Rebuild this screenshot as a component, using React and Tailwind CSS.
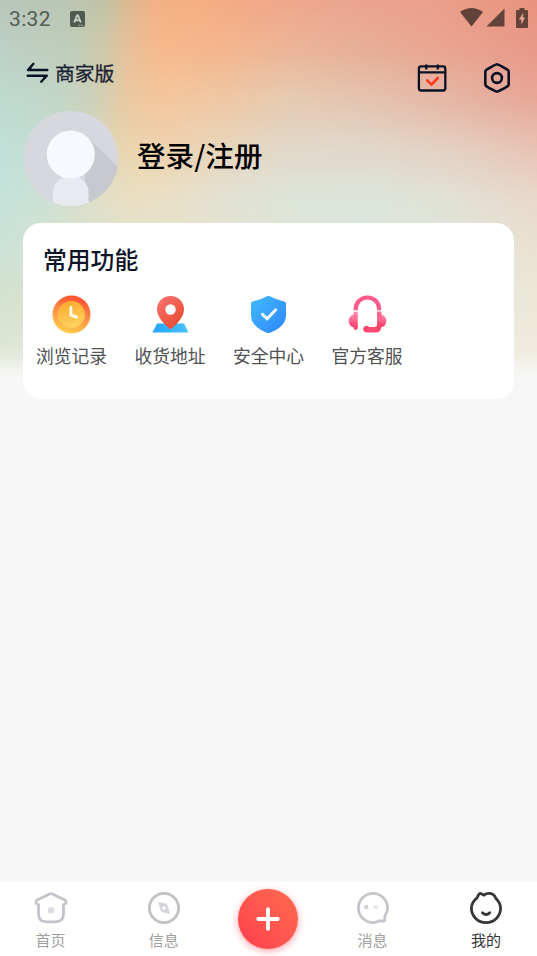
import React from "react";

// Colour mesh of the header artwork: one row of [x, colour] stops per height.
const mesh = [
  { y: 0, stops: [[0, "#b9c5ba"], [60, "#bac6b4"], [100, "#bfc4a8"], [125, "#d6bb94"], [150, "#f0b286"], [200, "#f6ae82"], [260, "#f1a888"], [330, "#eca68e"], [430, "#eba08b"], [537, "#e9927c"]] },
  { y: 50, stops: [[0, "#bcd1c6"], [70, "#c0cdbb"], [105, "#cfc9aa"], [130, "#e9c098"], [160, "#f7b98c"], [220, "#f4b68d"], [290, "#ecb598"], [360, "#e7af98"], [440, "#e9a591"], [537, "#e9998a"]] },
  { y: 100, stops: [[0, "#bedacf"], [60, "#c2d6c8"], [95, "#ced1b8"], [125, "#e8caa2"], [160, "#f4c69d"], [220, "#efc8a4"], [290, "#e5cbb3"], [370, "#e4c3b0"], [450, "#e5b6a5"], [537, "#e7a798"]] },
  { y: 150, stops: [[0, "#c0e0d8"], [60, "#c7dccf"], [95, "#d8d8be"], [130, "#ebd5ae"], [170, "#eed3b1"], [220, "#e8d6bd"], [290, "#e1d9ca"], [370, "#e1d8ca"], [450, "#e4d1c2"], [537, "#e7c3b5"]] },
  { y: 200, stops: [[0, "#c5e3db"], [50, "#cde1d4"], [90, "#dddfc9"], [130, "#eadfc3"], [170, "#e9e0c8"], [230, "#e1e2d3"], [300, "#dde5db"], [380, "#dde5dc"], [450, "#e1e2d6"], [537, "#e8d9ca"]] },
  { y: 250, stops: [[0, "#cbe2d6"], [90, "#dce3cf"], [200, "#e8e4cf"], [350, "#dde8dd"], [450, "#e2e6da"], [537, "#eae2d2"]] },
  { y: 300, stops: [[0, "#d4e2ce"], [100, "#e2e4cc"], [350, "#e3e8db"], [537, "#ebe8d8"]] },
  { y: 348, stops: [[0, "#dee6d5"], [200, "#e6e9db"], [537, "#efebdc"]] },
  { y: 376, stops: [[0, "#f7f7f7"], [537, "#f7f7f7"]] },
];

function MeshBackground() {
  return (
    <svg className="absolute inset-x-0 top-0" width="537" height="395" viewBox="0 0 537 395" aria-hidden="true">
      <defs>
        <filter id="soften" filterUnits="userSpaceOnUse" x="-40" y="-40" width="617" height="480" colorInterpolationFilters="sRGB">
          <feGaussianBlur stdDeviation="5" />
        </filter>
        {mesh.map((row, i) => {
          const prev = i ? mesh[i - 1].y : -60;
          const end = i ? row.y : -50;
          return (
            <React.Fragment key={row.y}>
              <linearGradient id={`row${i}`} gradientUnits="userSpaceOnUse" x1="0" x2="537" y1="0" y2="0">
                {row.stops.map(([x, c]) => (
                  <stop key={x} offset={x / 537} stopColor={c} />
                ))}
              </linearGradient>
              <linearGradient id={`fade${i}`} gradientUnits="userSpaceOnUse" x1="0" x2="0" y1={prev} y2={end}>
                <stop offset="0" stopColor="#fff" stopOpacity="0" />
                <stop offset="1" stopColor="#fff" />
              </linearGradient>
              <mask id={`mask${i}`} maskUnits="userSpaceOnUse" x="-40" y="-40" width="617" height="480">
                <rect x="-40" y="-40" width="617" height="480" fill={`url(#fade${i})`} />
              </mask>
            </React.Fragment>
          );
        })}
      </defs>
      <g filter="url(#soften)">
        {mesh.map((row, i) => (
          <rect key={row.y} x="-40" y="-40" width="617" height="480" fill={`url(#row${i})`} mask={`url(#mask${i})`} />
        ))}
      </g>
    </svg>
  );
}

function StatusBar() {
  return (
    <div className="flex h-9 items-center justify-between pl-[9px] pr-[9px] pt-px">
      <div className="flex items-center gap-[19px]">
        <span className="font-[Roboto] text-[21px] leading-9 tracking-[0.35px] text-[#535d55]">3:32</span>
        <svg width="15" height="16" viewBox="0 0 15 16">
          <rect width="15" height="16" rx="2" fill="#4f5a50" />
          <path d="M4.200 11.500 7 4.500h1l2.800 7M5.200 9.300h4.600" fill="none" stroke="#c5d0c2" strokeWidth="1.900" />
          <path d="M8 14.300h5.500" stroke="#a5b0a4" strokeWidth=".8" />
        </svg>
      </div>
      <div className="mt-[-2px] flex items-center">
        <svg width="23" height="19" viewBox="0 0 23 19">
          <path d="M0 4Q11.500-4 23 4L11.500 18.500Z" fill="#624339" />
        </svg>
        <svg className="ml-[3px]" width="19" height="19" viewBox="0 0 19 19">
          <path d="M18.500.5V18.500H.5Z" fill="#624339" />
        </svg>
        <svg className="ml-[11px]" width="12" height="20" viewBox="0 0 12 20">
          <path d="M3.500 0h5v2H11a1 1 0 0 1 1 1v16a1 1 0 0 1-1 1H1a1 1 0 0 1-1-1V3a1 1 0 0 1 1-1h2.500Z" fill="#624339" />
          <path d="M7.500 4.500 3 11.500h2.300v5L9 9.500H6.700Z" fill="#efa58f" />
        </svg>
      </div>
    </div>
  );
}

function SwapIcon() {
  return (
    <svg width="23" height="22" viewBox="0 0 23 22" fill="none" stroke="#0b1226" strokeWidth="2.400" strokeLinecap="round" strokeLinejoin="round">
      <path d="M21.300 8H2L7.400 1.800" />
      <path d="M1.700 13.700H20.800L15.200 19.700" />
      <path d="M2.500 8 5.500 5.500V8ZM20.300 13.700 17.300 16.200V13.700Z" fill="#0b1226" stroke="none" />
    </svg>
  );
}

function CalendarIcon() {
  return (
    <svg width="30" height="30" viewBox="0 0 30 30" fill="none">
      <g stroke="#0b1226" strokeWidth="2.300">
        <rect x="1.900" y="3.300" width="26.400" height="24.200" rx="2.200" />
        <path d="M1.600 9.300h26.800M9.300 1.500v5M20.800 1.500v5" />
      </g>
      <path d="m10.300 17.500 4.200 4.200 6.300-6.700" stroke="#ff3b24" strokeWidth="2.600" strokeLinecap="round" strokeLinejoin="round" />
    </svg>
  );
}

function SettingIcon() {
  return (
    <svg width="28" height="32" viewBox="0 0 28 32" fill="none" stroke="#0b1226" strokeWidth="2.600" strokeLinejoin="round">
      <path d="M14 2.200C15 2.200 24 7 25.200 8.400Q25.700 9 25.700 10V22Q25.700 23 25.200 23.600C24 25 15 29.800 14 29.800S4 25 2.800 23.600Q2.300 23 2.300 22V10Q2.300 9 2.800 8.400C4 7 13 2.200 14 2.200Z" />
      <circle cx="14" cy="16" r="4.900" />
    </svg>
  );
}

function Avatar() {
  return (
    <svg width="96" height="96" viewBox="0 0 96 96">
      <defs>
        <clipPath id="avatarClip">
          <circle cx="47.800" cy="47.500" r="47.500" />
        </clipPath>
      </defs>
      <g clipPath="url(#avatarClip)">
        <rect width="96" height="96" fill="#d7d8dd" />
        <path d="M64 26 110 70V96H62V60Z" fill="#c8c9cf" />
        <path d="M30 96V82C30 72 38 64.500 47.800 64.500S65.600 72 65.600 82V96Z" fill="#e7eaef" />
        <circle cx="47.800" cy="43.500" r="24" fill="#f6f9ff" />
      </g>
    </svg>
  );
}

function ClockIcon() {
  return (
    <svg width="39" height="39" viewBox="0 0 39 39">
      <defs>
        <linearGradient id="ring" x1=".7" y1="0" x2=".4" y2="1">
          <stop offset="0" stopColor="#ff4a2c" />
          <stop offset=".5" stopColor="#fb8f48" />
          <stop offset="1" stopColor="#ffce48" />
        </linearGradient>
        <linearGradient id="face" x1=".3" y1="0" x2=".6" y2="1">
          <stop offset="0" stopColor="#fba92f" />
          <stop offset="1" stopColor="#ffd35f" />
        </linearGradient>
      </defs>
      <circle cx="19.500" cy="19.500" r="19" fill="url(#ring)" />
      <circle cx="19.300" cy="19.500" r="13.600" fill="url(#face)" />
      <path d="M18.900 12.500V20.200L24.500 22" fill="none" stroke="#fffaf0" strokeWidth="2.900" strokeLinecap="round" strokeLinejoin="round" />
    </svg>
  );
}

function PinIcon() {
  return (
    <svg width="39" height="39" viewBox="0 0 39 39">
      <defs>
        <linearGradient id="pin" x1="0" y1="0" x2=".8" y2="1">
          <stop offset="0" stopColor="#fa7474" />
          <stop offset="1" stopColor="#e64a2c" />
        </linearGradient>
        <linearGradient id="map" x1="0" x2="1">
          <stop offset="0" stopColor="#22a5fb" />
          <stop offset="1" stopColor="#4cc2fa" />
        </linearGradient>
      </defs>
      <path d="M6 28.500H33L37.500 37.500H1.500Z" fill="url(#map)" />
      <path d="M19.500 1C27 1 33 6.700 33 14.200 33 23.500 23.500 31 19.500 34.300 15.500 31 6 23.500 6 14.200 6 6.700 12 1 19.500 1Z" fill="url(#pin)" />
      <circle cx="19.500" cy="14.500" r="5.200" fill="#fff" />
    </svg>
  );
}

function ShieldIcon() {
  return (
    <svg width="39" height="39" viewBox="0 0 39 39">
      <defs>
        <linearGradient id="shield" x1="0" y1="0" x2="1" y2="1">
          <stop offset="0" stopColor="#41baf8" />
          <stop offset="1" stopColor="#2f86ff" />
        </linearGradient>
      </defs>
      <path d="M18 1.200Q19.500.5 21 1.200C25.500 3.600 30 5.300 35.500 6.400Q37 6.800 37 8.200V20.500C37 29 29 35 21 37.800Q19.500 38.300 18 37.800C10 35 2 29 2 20.500V8.200Q2 6.800 3.500 6.400C9 5.300 13.500 3.600 18 1.200Z" fill="url(#shield)" />
      <path d="m13.500 19.300 4.700 4.500 8.500-9" fill="none" stroke="#f2f9ff" strokeWidth="3.100" strokeLinecap="round" strokeLinejoin="round" />
    </svg>
  );
}

function HeadsetIcon() {
  return (
    <svg width="39" height="39" viewBox="0 0 39 39">
      <defs>
        <linearGradient id="cup" x1="0" y1="0" x2="0" y2="1">
          <stop offset="0" stopColor="#ff8eb0" />
          <stop offset="1" stopColor="#ff3a66" />
        </linearGradient>
      </defs>
      <path d="M6.500 19.500H5.500Q.7 21 .7 26T5.500 32.300H6.500Z" fill="url(#cup)" />
      <path d="M32.500 19.500H33.500Q38.300 21 38.300 26T33.500 32.300H32.500Z" fill="url(#cup)" />
      <path d="M7.700 15.300V14a11.700 11.500 0 0 1 23.400 0v1.300" fill="none" stroke="#ff5b8a" strokeWidth="4.200" />
      <path d="M5.600 16.800h4.200v16a2.100 2.100 0 0 1-4.200 0Z" fill="url(#cup)" />
      <path d="M29 16.800h4.200V32q0 5.500-5.500 5.500H18.200a3.400 3.400 0 1 1 3-5.500h5.300q2.500 0 2.500-2Z" fill="#fb4a70" />
      <path d="M29 16.800h4.200v10h-4.200Z" fill="#ff678f" />
    </svg>
  );
}

const features = [
  { label: "浏览记录", Icon: ClockIcon },
  { label: "收货地址", Icon: PinIcon },
  { label: "安全中心", Icon: ShieldIcon },
  { label: "官方客服", Icon: HeadsetIcon },
];

function HomeIcon() {
  return (
    <svg width="34" height="34" viewBox="0 0 34 34" fill="none">
      <path d="M15.600 3 3.200 9Q1.500 10.200 2.200 12.200Q2.500 13.200 4.500 13.700V22.500Q4.500 30.800 12.500 30.800H21.500Q29.500 30.800 29.500 22.500V13.700Q31.500 13.200 31.800 12.200Q32.500 10.200 30.800 9L18.400 3Q17 2.400 15.600 3Z" stroke="#c3c3ca" strokeWidth="2.800" strokeLinejoin="round" />
      <circle cx="17" cy="19.200" r="3.200" fill="#dcdce4" />
    </svg>
  );
}

function CompassIcon() {
  return (
    <svg width="34" height="34" viewBox="0 0 34 34" fill="none">
      <circle cx="17" cy="17" r="14.600" stroke="#c0c0c6" strokeWidth="2.800" />
      <path d="M11.500 11.500 19.500 13 22.700 22.500 14.500 20.500Z" fill="#d5d5dd" stroke="#dadae2" strokeLinejoin="round" />
      <circle cx="17" cy="17" r="1.700" fill="#fff" />
    </svg>
  );
}

function ChatIcon() {
  return (
    <svg width="34" height="34" viewBox="0 0 34 34" fill="none">
      <path d="M27.500 30H23C21 31 19.300 31.600 17 31.600A14.600 14.600 0 1 1 31.600 17C31.600 20 30.500 22.500 28.800 25V28.700Q28.800 30 27.500 30Z" stroke="#c5c5cb" strokeWidth="2.800" strokeLinejoin="round" />
      <circle cx="10.200" cy="16" r="2.200" fill="#cfcfd7" />
      <circle cx="19.800" cy="16" r="2.200" fill="#e7e7ec" />
    </svg>
  );
}

function MineIcon() {
  return (
    <svg width="34" height="34" viewBox="0 0 34 34" fill="none" stroke="#373737" strokeLinecap="round" strokeLinejoin="round">
      <path d="M15 4.200 11.800 2.500C9.700 2 9.200 5 8 6.800 5 9.200 2.400 12.800 2.400 17.300A14.600 14.400 0 0 0 31.600 17.300C31.600 13 29.200 9.800 26.800 7.300 25.800 4.500 23.500 2.400 20 2.400 17.800 2.400 16.200 3.200 15 4.200Z" strokeWidth="2.800" />
      <path d="M13.500 21.800Q17 25.300 20.700 21.800" strokeWidth="2.900" />
    </svg>
  );
}

function NavItem({ label, Icon, active }) {
  return (
    <button className="flex w-16 flex-col items-center pt-[9px]">
      <Icon />
      <span className={`mt-1 text-[15px] leading-[22px] ${active ? "text-[#333333]" : "text-[#a0a0a0]"}`}>{label}</span>
    </button>
  );
}

export default function App() {
  return (
    <div className="relative flex h-[956px] w-[537px] flex-col overflow-hidden bg-[#f7f7f7] font-['Noto_Sans_CJK_SC',sans-serif]">
      <MeshBackground />
      <div className="relative flex grow flex-col">
        <StatusBar />
        <header className="flex h-[75px] justify-between pl-[26px] pr-[26px]">
          <div className="flex h-[73px] items-center gap-[6px]">
            <SwapIcon />
            <span className="text-[19.800px] leading-7 text-[#1a2132] [-webkit-text-stroke:0.3px_#1a2132]">商家版</span>
          </div>
          <div className="flex h-[84px] items-center gap-[36px]">
            <CalendarIcon />
            <SettingIcon />
          </div>
        </header>
        <section className="flex h-28 items-start gap-[18px] pl-[23px]">
          <Avatar />
          <h1 className="mt-[23px] text-[28.600px] leading-[42px] text-black font-medium">登录/注册</h1>
        </section>
        <section className="mx-[23px] h-44 rounded-[18px] bg-white pt-[18px]">
          <h2 className="pl-[20px] text-[23.800px] leading-9 text-[#0d1528] font-medium">常用功能</h2>
          <div className="mt-[18px] flex">
            {features.map(({ label, Icon }) => (
              <div key={label} className="flex w-[98.500px] flex-col items-center pr-[1.500px]">
                <Icon />
                <span className="mt-[8px] text-[17.800px] leading-[26px] text-[#505154]">{label}</span>
              </div>
            ))}
          </div>
        </section>
      </div>
      <nav className="relative flex h-[74px] shrink-0 items-start justify-between bg-white pl-[18.500px] pr-[19px]">
        <NavItem label="首页" Icon={HomeIcon} />
        <div className="pl-[7px]">
          <NavItem label="信息" Icon={CompassIcon} />
        </div>
        <button className="mt-[7px] flex size-[60px] items-center justify-center rounded-full bg-linear-to-tr from-[#ff3d4d] to-[#ff6b50] shadow-[0_2px_7px_rgba(255,65,75,0.5)]" aria-label="plus">
          <svg width="24" height="24" viewBox="0 0 24 24">
            <path d="M12 2.200v19.600M2.200 12h19.600" stroke="#fff" strokeWidth="3.800" strokeLinecap="round" />
          </svg>
        </button>
        <div className="pr-[7px]">
          <NavItem label="消息" Icon={ChatIcon} />
        </div>
        <NavItem label="我的" Icon={MineIcon} active />
      </nav>
    </div>
  );
}
